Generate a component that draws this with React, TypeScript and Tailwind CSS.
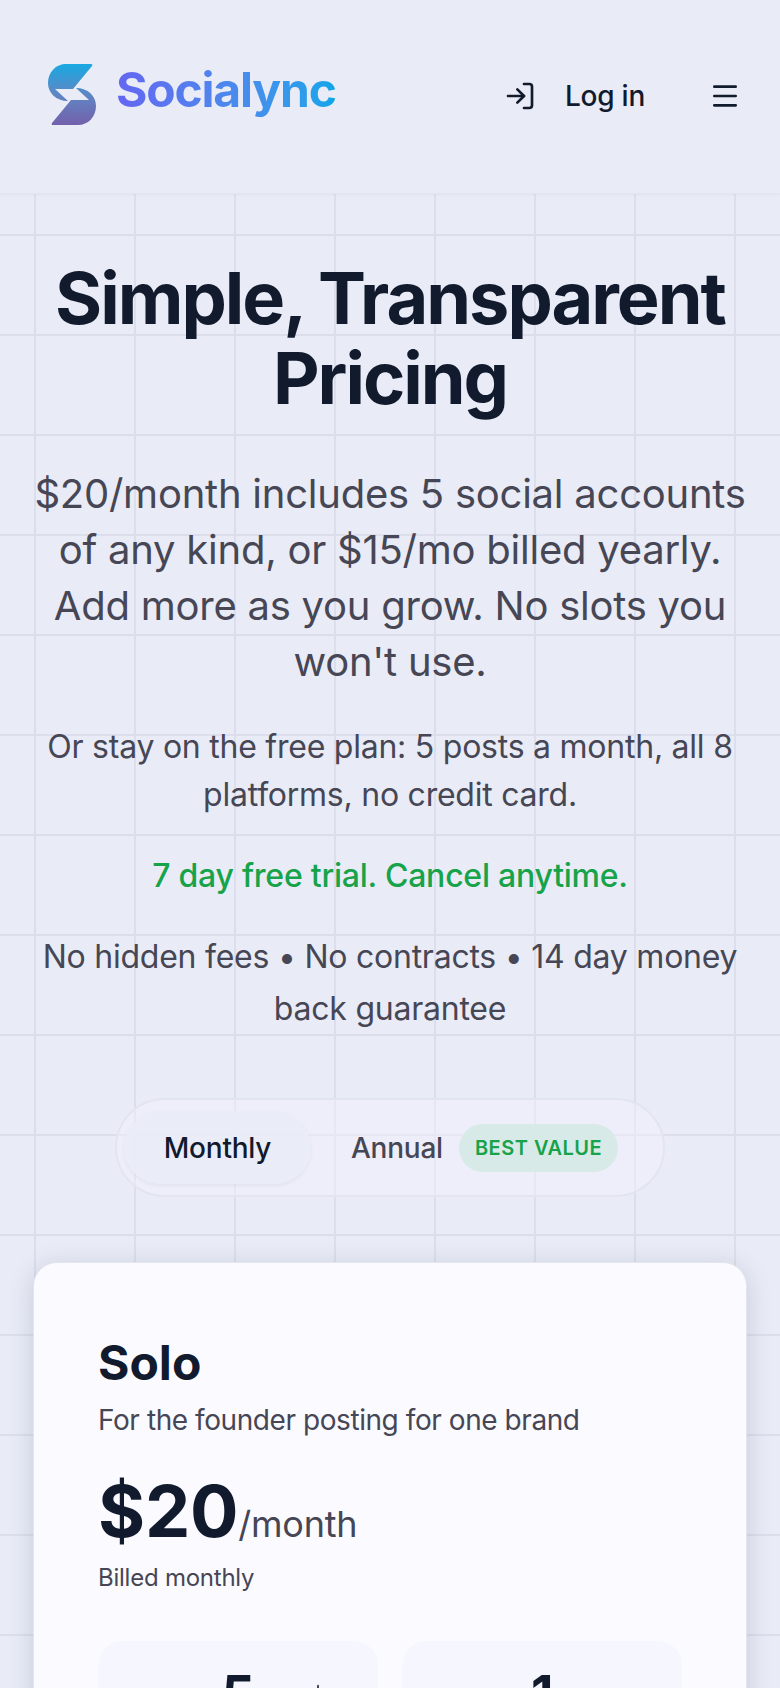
import { LogIn, Menu, Minus, Plus } from "lucide-react";

function Logo() {
  return (
    <svg className="mt-[10px]" width="48" height="61" viewBox="0 0 48 61" fill="none">
      <defs>
        <linearGradient id="logoFill" gradientUnits="userSpaceOnUse" x1="0" y1="0" x2="0" y2="61">
          <stop offset="0" stopColor="#18a9e2" />
          <stop offset="0.5" stopColor="#5f86c4" />
          <stop offset="1" stopColor="#7360ab" />
        </linearGradient>
      </defs>
      <path d="M18 0H43Q45 0 44 2L25 25H7L20 37C8 37 0 29 0 19C0 8 8 0 18 0Z" fill="url(#logoFill)" />
      <path d="M30 61H5Q3 61 4 59L23 36H41L28 24C40 24 48 32 48 42C48 53 40 61 30 61Z" fill="url(#logoFill)" />
    </svg>
  );
}

export default function App() {
  return (
    <div className="h-[1688px] w-[780px] overflow-hidden bg-[#e9ecf6] bg-[linear-gradient(#dcdfeb_2px,transparent_2px),linear-gradient(90deg,#dcdfeb_2px,transparent_2px)] bg-[size:100px_100px] bg-[position:34px_34px] font-['Inter',sans-serif] tracking-[-0.015em] text-[#121b2e]">
      <header className="flex h-[194px] items-center justify-between border-b border-[#e3e6f0] bg-[#e9ecf6]/95 pr-[39px] pl-[48px] shadow-[0_1px_3px_rgba(60,70,110,0.05)]">
        <div className="mb-[14px] flex items-center gap-[20px]">
          <Logo />
          <span className="bg-gradient-to-r from-[#6366f1] to-[#0ea5e9] bg-clip-text text-[48px] leading-[60px] font-bold tracking-[-1.2px] text-transparent">
            Socialync
          </span>
        </div>
        <div className="mb-[1px] flex items-center">
          <LogIn size={32} strokeWidth={2} />
          <span className="ml-[29px] text-[28px] leading-[40px] font-medium">Log in</span>
          <Menu className="ml-[64px]" size={32} strokeWidth={2} />
        </div>
      </header>
      <main className="px-[33px] pt-[64px]">
        <h1 className="text-center text-[72px] leading-[80px] font-bold tracking-[-2px]">
          Simple, Transparent
          <br />
          Pricing
        </h1>
        <p className="mt-[48px] text-center text-[40px] leading-[56px] text-[#464655]">
          $20/month includes 5 social accounts of any kind, or $15/mo billed yearly. Add more as you grow. No slots you won't use.
        </p>
        <p className="mt-[33px] text-center text-[32px] leading-[48px] text-[#464655]">
          Or stay on the free plan: 5 posts a month, all 8 platforms, no credit card.
        </p>
        <p className="mt-[33px] text-center text-[32px] leading-[48px] font-medium text-[#16a34a]">
          7 day free trial. Cancel anytime.
        </p>
        <p className="mt-[31px] text-center text-[32px] leading-[52px] text-[#464655]">
          No hidden fees • No contracts • 14 day money back guarantee
        </p>
        <div className="mx-auto mt-[63px] flex h-[99px] w-[550px] items-center gap-[40px] rounded-full border-2 border-[#e2e5f1] bg-[#f1effd]/50 pl-[7px]">
          <div className="flex h-[73px] w-[187px] items-center justify-center rounded-full bg-[#e9ecf6]/90 text-[28px] font-medium shadow-[0_2px_4px_rgba(0,0,0,0.05)]">
            Monthly
          </div>
          <div className="flex items-center gap-[16px]">
            <span className="text-[28px] font-medium text-[#464655]">Annual</span>
            <span className="flex h-[48px] items-center rounded-full bg-[#d8eae8] px-[16px] text-[20px] font-semibold tracking-[0.5px] text-[#16a34a]">
              BEST VALUE
            </span>
          </div>
        </div>
        <section className="mt-[65px] h-[500px] rounded-[24px] border border-[#e2e5f0] bg-[#fbfbff] px-[64px] pt-[72px] shadow-[0_4px_24px_rgba(60,70,110,0.2)]">
          <h2 className="text-[48px] leading-[56px] font-bold tracking-[0px]">Solo</h2>
          <p className="mt-[9px] text-[28px] leading-[40px] tracking-[-0.43px] text-[#464655]">For the founder posting for one brand</p>
          <div className="mt-[23px] flex items-baseline">
            <span className="text-[72px] leading-[96px] font-bold">$20</span>
            <span className="text-[36px] text-[#464655]">/month</span>
          </div>
          <p className="mt-[1px] text-[24px] leading-[36px] text-[#464655]">Billed monthly</p>
          <div className="mt-[45px] grid grid-cols-2 gap-[24px]">
            <div className="flex h-[160px] items-start justify-center gap-[47px] rounded-[24px] bg-[#f6f7fe] pt-[24px]">
              <Minus className="mt-[14px]" size={32} strokeWidth={1.5} />
              <span className="text-[52px] leading-[60px] font-bold">5</span>
              <Plus className="mt-[14px] text-[#464655]" size={32} strokeWidth={1.5} />
            </div>
            <div className="flex h-[160px] items-start justify-center rounded-[24px] bg-[#f6f7fe] pt-[24px]">
              <span className="text-[52px] leading-[60px] font-bold">1</span>
            </div>
          </div>
        </section>
      </main>
    </div>
  );
}
